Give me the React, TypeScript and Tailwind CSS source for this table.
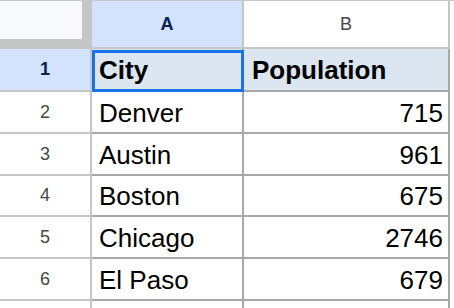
import React from 'react';

const rows = [
  { n: 2, city: 'Denver', pop: '715', h: 'h-[42px]' },
  { n: 3, city: 'Austin', pop: '961', h: 'h-[42px]' },
  { n: 4, city: 'Boston', pop: '675', h: 'h-[41px]' },
  { n: 5, city: 'Chicago', pop: '2746', h: 'h-[42px]' },
  { n: 6, city: 'El Paso', pop: '679', h: 'h-[42px]' },
];

const App = () => {
  return (
    <div
      className="relative w-[454px] h-[308px] overflow-hidden bg-white"
      style={{ fontFamily: '"Liberation Sans", Arial, sans-serif' }}
    >
      {/* Column headers */}
      <div className="flex border-t border-[#c4c7c5]">
        <div className="w-[92px] h-[48px] bg-[#c4c7c5]">
          <div className="w-[82px] h-[38px] bg-[#f8f9fa]" />
        </div>
        <div className="w-[152px] h-[48px] bg-[#d3e3fd] border-r-2 border-b-2 border-[#c4c7c5] flex items-center justify-center text-[18px] font-bold text-[#0b2250]">
          A
        </div>
        <div className="w-[206px] h-[48px] border-r-2 border-b-2 border-[#c4c7c5] flex items-center justify-center text-[18px] text-[#444746]">
          B
        </div>
      </div>

      {/* Row 1 (header row) */}
      <div className="flex h-[43px]">
        <div className="w-[92px] bg-[#d3e3fd] border-r-2 border-b-2 border-[#c4c7c5] flex items-center justify-center text-[18px] font-bold text-[#0b2250]">
          1
        </div>
        <div className="w-[152px] bg-[#dce6f0] border-r-2 border-b-2 border-[#a8a8a8] flex items-center pl-[7px] pt-[2px] text-[26px] font-bold text-black">
          City
        </div>
        <div className="w-[206px] bg-[#dce6f0] border-r-2 border-b-2 border-[#a8a8a8] flex items-center pl-[8px] pt-[2px] text-[26px] font-bold text-black">
          Population
        </div>
      </div>

      {rows.map((r) => (
        <div key={r.n} className={`flex ${r.h}`}>
          <div className="w-[92px] border-r-2 border-b-2 border-[#c4c7c5] flex items-center justify-center text-[18px] text-[#444746]">
            {r.n}
          </div>
          <div className="w-[152px] border-r-2 border-b-2 border-[#a8a8a8] flex items-center pl-[7px] pt-[2px] text-[26px] text-black">
            {r.city}
          </div>
          <div className="w-[206px] border-r-2 border-b-2 border-[#a8a8a8] flex items-center justify-end pr-[5px] pt-[2px] text-[26px] text-black">
            {r.pop}
          </div>
        </div>
      ))}

      {/* partial next row */}
      <div className="flex h-[10px]">
        <div className="w-[92px] border-r-2 border-[#c4c7c5]" />
        <div className="w-[152px] border-r-2 border-[#a8a8a8]" />
        <div className="w-[206px] border-r-2 border-[#a8a8a8]" />
      </div>

      {/* Selected cell A1 */}
      <div className="absolute left-[92px] top-[50px] w-[152px] h-[42px] border-[3px] border-[#1a73e8] pointer-events-none" />
    </div>
  );
};

export default App;
